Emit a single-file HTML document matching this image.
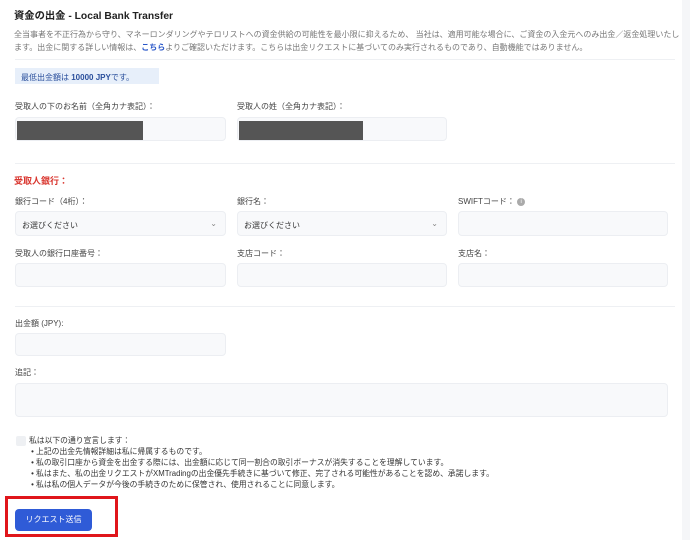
<!DOCTYPE html>
<html><head><meta charset="utf-8"><style>
*{margin:0;padding:0;box-sizing:border-box}
body{width:690px;height:540px;background:#fff;position:relative;overflow:hidden;font-family:"Liberation Sans","Noto Sans CJK JP",sans-serif;color:#333}
.a{position:absolute;white-space:nowrap}
.lbl{font-size:8px;color:#444}
.inp{position:absolute;background:#f8f9fb;border:1px solid #eceef2;border-radius:4px}
.hr{position:absolute;left:15px;width:660px;height:1px;background:#eef0f3}
.sel{font-size:8px;color:#333;padding:8px 0 0 6px}
.chev{position:absolute;right:8px;top:7px;font-size:8px;color:#888}
</style></head><body>
<div class="a" style="left:682px;top:0;width:8px;height:540px;background:#f5f6f8"></div>
<div class="a" style="left:14px;top:7px;font-size:10.3px;font-weight:bold;color:#222">資金の出金 - Local Bank Transfer</div>
<div class="a" style="left:14px;top:28px;font-size:8px;color:#777;line-height:13px">全当事者を不正行為から守り、マネーロンダリングやテロリストへの資金供給の可能性を最小限に抑えるため、 当社は、適用可能な場合に、ご資金の入金元へのみ出金／返金処理いたし<br>ます。出金に関する詳しい情報は、<b style="color:#2856c8">こちら</b>よりご確認いただけます。こちらは出金リクエストに基づいてのみ実行されるものであり、自動機能ではありません。</div>
<div class="hr" style="top:59px"></div>
<div class="a" style="left:15px;top:68px;width:144px;height:16px;background:#e7effa;font-size:8px;color:#2a4f9c;padding:4px 0 0 6px">最低出金額は <b>10000 JPY</b>です。</div>
<div class="a lbl" style="left:15px;top:101px">受取人の下のお名前（全角カナ表記）：</div>
<div class="a lbl" style="left:237px;top:101px">受取人の姓（全角カナ表記）：</div>
<div class="inp" style="left:15px;top:117px;width:211px;height:24px"></div>
<div class="inp" style="left:237px;top:117px;width:210px;height:24px"></div>
<div class="a" style="left:17px;top:121px;width:126px;height:19px;background:#555"></div>
<div class="a" style="left:239px;top:121px;width:124px;height:19px;background:#555"></div>
<div class="hr" style="top:163px"></div>
<div class="a" style="left:14px;top:174px;font-size:9px;font-weight:bold;color:#d9352e">受取人銀行：</div>
<div class="a lbl" style="left:15px;top:196px">銀行コード（4桁）：</div>
<div class="a lbl" style="left:237px;top:196px">銀行名：</div>
<div class="a lbl" style="left:458px;top:196px">SWIFTコード： <span style="display:inline-block;width:8px;height:8px;border-radius:50%;background:#aaa;color:#fff;font-size:6px;text-align:center;line-height:8px;vertical-align:middle">i</span></div>
<div class="inp sel" style="left:15px;top:211px;width:211px;height:25px">お選びください<span class="chev">⌄</span></div>
<div class="inp sel" style="left:237px;top:211px;width:210px;height:25px">お選びください<span class="chev">⌄</span></div>
<div class="inp" style="left:458px;top:211px;width:210px;height:25px"></div>
<div class="a lbl" style="left:15px;top:248px">受取人の銀行口座番号：</div>
<div class="a lbl" style="left:237px;top:248px">支店コード：</div>
<div class="a lbl" style="left:458px;top:248px">支店名：</div>
<div class="inp" style="left:15px;top:263px;width:211px;height:24px"></div>
<div class="inp" style="left:237px;top:263px;width:210px;height:24px"></div>
<div class="inp" style="left:458px;top:263px;width:210px;height:24px"></div>
<div class="hr" style="top:306px"></div>
<div class="a lbl" style="left:15px;top:318px">出金額 (JPY):</div>
<div class="inp" style="left:15px;top:333px;width:211px;height:23px"></div>
<div class="a lbl" style="left:15px;top:367px">追記：</div>
<div class="inp" style="left:15px;top:383px;width:653px;height:34px"></div>
<div class="a" style="left:16px;top:436px;width:10px;height:10px;background:#eef0f3;border-radius:2px"></div>
<div class="a" style="left:29px;top:435px;font-size:7.8px;color:#333;line-height:11px">私は以下の通り宣言します：<br>
&nbsp;• 上記の出金先情報詳細は私に帰属するものです。<br>
&nbsp;• 私の取引口座から資金を出金する際には、出金額に応じて同一割合の取引ボーナスが消失することを理解しています。<br>
&nbsp;• 私はまた、私の出金リクエストがXMTradingの出金優先手続きに基づいて修正、完了される可能性があることを認め、承諾します。<br>
&nbsp;• 私は私の個人データが今後の手続きのために保管され、使用されることに同意します。</div>
<div class="a" style="left:5px;top:496px;width:113px;height:41px;border:3px solid #e0161b"></div>
<div class="a" style="left:15px;top:509px;width:77px;height:22px;background:#2f5bd7;border-radius:4px;color:#fff;font-size:8px;text-align:center;line-height:22px">リクエスト送信</div>
</body></html>
